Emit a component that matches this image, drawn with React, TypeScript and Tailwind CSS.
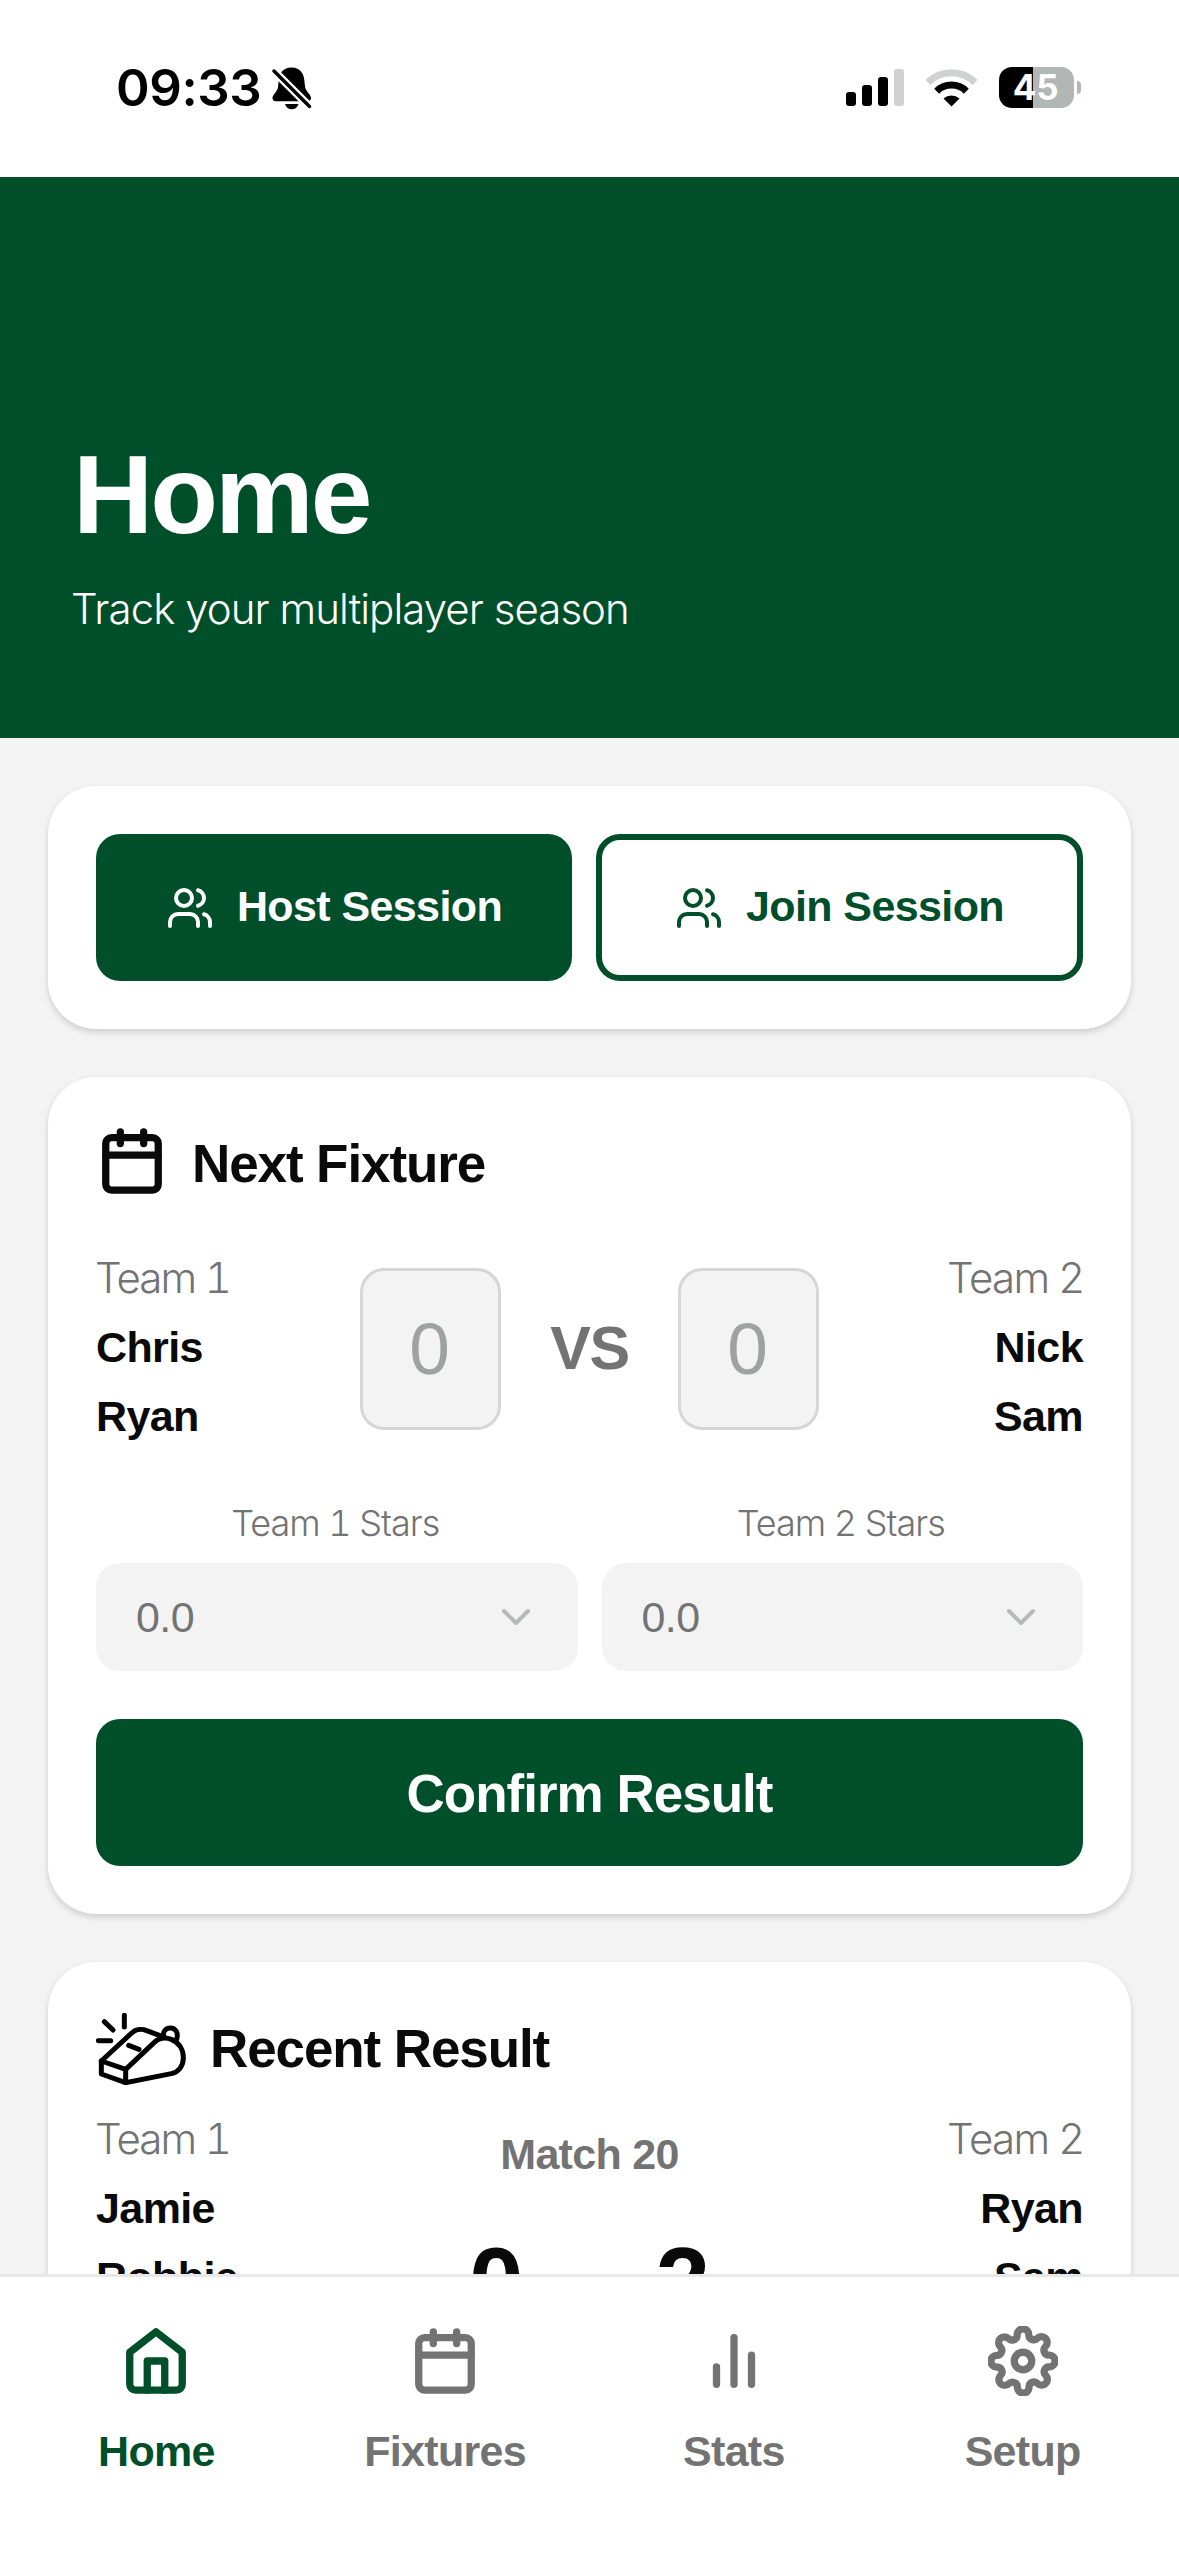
import React from 'react';
import { ChevronDown, Users } from 'lucide-react';
import { FiBarChart2, FiCalendar, FiHome, FiSettings } from 'react-icons/fi';

const StatusBar = () => {
  return (
    <div className="h-[177px] shrink-0 bg-white flex justify-between items-start pt-[67px] pl-[116px] pr-[98px]">
      <div className="flex items-start">
        <span className="w-[143px] font-['Inter',sans-serif] font-[580] text-[51px] leading-[42px] tracking-[-0.4px] text-black">
          09:33
        </span>
        <svg className="ml-[13px]" width="40" height="43" viewBox="0 0 40 43">
          <path
            d="M19.5 .5C24.5 .5 28 2.5 30.3 6.2C32.6 10 32.3 15 33.2 20.500C34 24.500 39 27.500 39 31C39 33.500 37.500 34.300 35 34.300H4C1.500 34.300 .5 33 .5 31C.5 28 5 25 6 20.500C6.800 15 6.500 9.500 9 5.700C11.200 2.500 14.500 .5 19.500 .5Z"
            fill="#000"
          />
          <path d="M13 37H26.500C25.500 40.500 23 42.300 19.700 42.300C16.500 42.300 14 40.500 13 37Z" fill="#000" />
          <path d="M-1 1L39 41" stroke="#fff" strokeWidth="8" />
          <path d="M2 4L37.500 39.500" stroke="#000" strokeWidth="3.400" strokeLinecap="round" />
        </svg>
      </div>

      <div className="flex items-start">
        {/* Signal */}
        <div className="flex items-end gap-[6px] h-[39px]">
          <div className="w-[10px] h-[14px] rounded-[3px] bg-black" />
          <div className="w-[10px] h-[21px] rounded-[3px] bg-black" />
          <div className="w-[10px] h-[29px] rounded-[3px] bg-black" />
          <div className="w-[10px] h-[37px] rounded-[3px] bg-[#d0d2d1]" />
        </div>
        {/* Wifi */}
        <svg className="ml-[22px] mt-[2px]" width="51" height="38" viewBox="0 0 51 38" fill="none">
          <path d="M1.900 13.400A33.400 33.400 0 0 1 49.100 13.400" stroke="#d0d2d1" strokeWidth="7" />
          <path d="M10.700 22.200A21 21 0 0 1 40.300 22.200" stroke="#000" strokeWidth="7" />
          <path d="M25.500 37.500L17.500 29.500A12 12 0 0 1 33.500 29.500Z" fill="#000" />
        </svg>
        {/* Battery */}
        <div className="ml-[22px] w-[75px] h-[41px] rounded-[13px] bg-linear-to-r from-black from-45% to-[#b1b7b5] to-45% flex items-center justify-center pr-[2px]">
          <span className="font-['Inter',sans-serif] font-bold text-[35px] leading-[41px] tracking-[-0.3px] text-white">
            45
          </span>
        </div>
        <div className="ml-[3px] mt-[14px] w-[4px] h-[13px] rounded-r-full bg-[#b1b7b5]" />
      </div>
    </div>
  );
};

const WhistleIcon = () => {
  return (
    <svg
      width="90"
      height="72"
      viewBox="30 24 270 216"
      fill="none"
      stroke="#000"
      strokeWidth="15"
      strokeLinecap="round"
      strokeLinejoin="round"
    >
      <path d="M115 31V66M55 50L81 75M37 107H74" />
      <path d="M128 121L159 133" />
      <path d="M46 168L119 193V233L46 207Z" />
      <path d="M46 168L137 84C150 72 168 71 182 77L236 97" />
      <path d="M119 193L205 112C220 98 238 96 256 103C280 113 293 135 292 160C291 184 277 201 256 206L119 233" />
      <path d="M232 94C231 78 240 69 253 69C268 69 278 82 272 103" />
    </svg>
  );
};

const Team = ({ label, players, right = false }: { label: string; players: string[]; right?: boolean }) => {
  return (
    <div className={right ? 'w-[200px] text-right' : 'w-[200px]'}>
      <p
        className={
          right
            ? "font-['Inter',sans-serif] font-light text-[42px] leading-[69px] tracking-[-1.6px] text-[#737373]"
            : "-ml-px font-['Inter',sans-serif] font-light tabular-nums text-[42px] leading-[69px] tracking-[-1.9px] text-[#737373]"
        }
      >
        {label}
      </p>
      {players.map((player) => (
        <p key={player} className="pt-px font-bold text-[43px] leading-[68px] tracking-[-0.6px] text-[#0a0a0a]">
          {player}
        </p>
      ))}
    </div>
  );
};

const ScoreBox = () => {
  return (
    <div className="w-[141px] h-[162px] rounded-[24px] border-[3px] border-[#d6d6d6] bg-[#f3f3f3] flex items-center justify-center pr-[2px] text-[73px] text-[#9ca3a0]">
      0
    </div>
  );
};

const StarSelect = ({ label }: { label: string }) => {
  return (
    <div className="flex-1">
      <p className="pr-[3px] text-center font-['Inter',sans-serif] font-light tabular-nums text-[36px] leading-[48px] tracking-[-1px] text-[#737373]">
        {label}
      </p>
      <div className="mt-4 h-[108px] rounded-[24px] bg-[#f3f3f3] flex items-center justify-between pl-10 pr-[38px]">
        <span className="text-[43px] tracking-[-0.6px] text-[#737373]">0.0</span>
        <ChevronDown size={48} strokeWidth={2} color="#b5bab8" />
      </div>
    </div>
  );
};

const navItems = [
  { label: 'Home', Icon: FiHome, active: true },
  { label: 'Fixtures', Icon: FiCalendar, active: false },
  { label: 'Stats', Icon: FiBarChart2, active: false },
  { label: 'Setup', Icon: FiSettings, active: false },
];

const App = () => {
  return (
    <div className="w-[1179px] h-[2556px] overflow-hidden flex flex-col bg-[#f3f3f3] font-['Liberation_Sans',sans-serif]">
      <StatusBar />

      {/* Header */}
      <header className="h-[561px] shrink-0 bg-[#004f2b] pt-[258px] pl-[71px] text-white">
        <h1 className="pl-[2px] pt-px font-bold text-[111px] leading-[119px] tracking-[-3px]">Home</h1>
        <p className="mt-6 font-['Inter',sans-serif] font-light text-[42px] leading-[60px] tracking-[-0.95px]">
          Track your multiplayer season
        </p>
      </header>

      <main className="flex-1 min-h-0 overflow-hidden p-12 flex flex-col gap-12">
        {/* Session Section */}
        <section className="shrink-0 rounded-[48px] bg-white p-12 shadow-[0_3px_6px_rgba(0,0,0,0.16)] flex gap-6">
          <button className="w-[476px] h-[147px] rounded-[24px] bg-[#004f2b] text-white flex items-center justify-center gap-[23px]">
            <Users size={48} strokeWidth={2} />
            <span className="pb-[2px] font-bold text-[43px] tracking-[-0.6px]">Host Session</span>
          </button>
          <button className="flex-1 h-[147px] rounded-[24px] border-[6px] border-[#004f2b] text-[#004f2b] flex items-center justify-center gap-[23px]">
            <Users size={48} strokeWidth={2} />
            <span className="pb-[2px] font-bold text-[43px] tracking-[-0.6px]">Join Session</span>
          </button>
        </section>

        {/* Next Fixture Section */}
        <section className="shrink-0 rounded-[48px] bg-white p-12 shadow-[0_3px_6px_rgba(0,0,0,0.16)]">
          <div className="h-[72px] flex items-center gap-[25px] pl-px">
            <FiCalendar size={70} strokeWidth={2.5} color="#0a0a0a" />
            <h2 className="pt-[6px] font-bold text-[53px] leading-[72px] tracking-[-1.1px] text-[#0a0a0a]">
              Next Fixture
            </h2>
          </div>

          <div className="mt-[46px] flex justify-between">
            <Team label="Team 1" players={['Chris', 'Ryan']} />
            <div className="pt-[25px] flex gap-12">
              <ScoreBox />
              <div className="w-[81px] h-[162px] flex items-center justify-center font-bold text-[61px] tracking-[-1.5px] text-[#737373]">
                VS
              </div>
              <ScoreBox />
            </div>
            <Team label="Team 2" players={['Nick', 'Sam']} right />
          </div>

          <div className="mt-[49px] flex gap-6">
            <StarSelect label="Team 1 Stars" />
            <StarSelect label="Team 2 Stars" />
          </div>

          <button className="mt-12 w-full h-[147px] pt-[2px] rounded-[24px] bg-[#004f2b] text-white font-bold text-[53px] tracking-[-1px]">
            Confirm Result
          </button>
        </section>

        {/* Recent Result Section */}
        <section className="shrink-0 rounded-[48px] bg-white px-12 pt-[51px] pb-12 shadow-[0_3px_6px_rgba(0,0,0,0.16)]">
          <div className="h-[72px] flex items-center gap-6">
            <WhistleIcon />
            <h2 className="font-bold text-[53px] leading-[72px] tracking-[-1.1px] text-[#0a0a0a]">Recent Result</h2>
          </div>
          <div className="mt-[19px] flex justify-between">
            <Team label="Team 1" players={['Jamie', 'Robbie']} />
            <div className="pt-5 flex flex-col items-center">
              <p className="font-bold text-[43px] leading-[60px] tracking-[-0.7px] text-[#737373]">Match 20</p>
              <div className="mt-12 flex gap-[132px] font-bold text-[98px] leading-[100px] text-[#0a0a0a]">
                <span>0</span>
                <span>2</span>
              </div>
            </div>
            <Team label="Team 2" players={['Ryan', 'Sam']} right />
          </div>
        </section>
      </main>

      {/* Bottom Navigation */}
      <nav className="h-[282px] shrink-0 border-t-[3px] border-[#e8e8e8] bg-white px-3 pt-[49px] grid grid-cols-4">
        {navItems.map(({ label, Icon, active }) => (
          <div
            key={label}
            className={
              active ? 'flex flex-col items-center text-[#004f2b]' : 'flex flex-col items-center text-[#737373]'
            }
          >
            <Icon size={70} strokeWidth={2.5} />
            <span className="mt-[25px] font-bold text-[43px] leading-[60px] tracking-[-0.7px]">{label}</span>
          </div>
        ))}
      </nav>
    </div>
  );
};

export default App;
